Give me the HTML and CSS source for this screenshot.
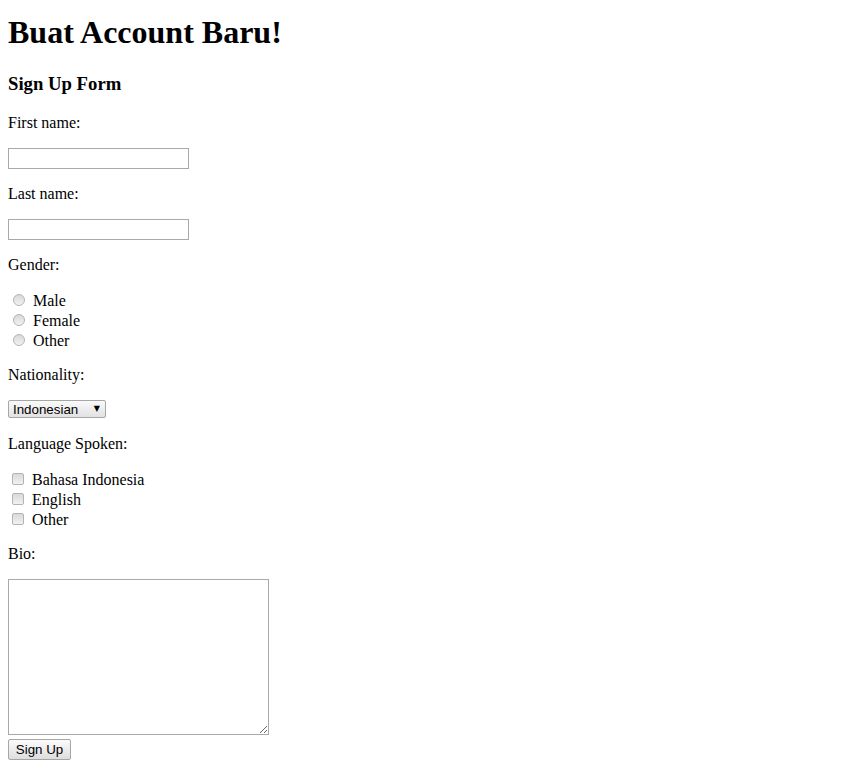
FILE: index.html
```html
<!DOCTYPE html>
<html>
<head>
<meta charset="utf-8">
<title>Sign Up</title>
<link rel="stylesheet" href="styles.css">
</head>
<body class="page">
<h1 class="page-title">Buat Account Baru!</h1>
<h3>Sign Up Form</h3>
<form>
<p><label for="fname">First name:</label></p>
<input class="field" type="text" id="fname">
<p><label for="lname">Last name:</label></p>
<input class="field" type="text" id="lname">
<p>Gender:</p>
<div class="opt"><input class="radio" type="radio" name="g" id="m"><label for="m">Male</label></div>
<div class="opt"><input class="radio" type="radio" name="g" id="f"><label for="f">Female</label></div>
<div class="opt"><input class="radio" type="radio" name="g" id="o"><label for="o">Other</label></div>
<p>Nationality:</p>
<div class="select-row"><span class="select-wrap"><select class="select"><option>Indonesian</option><option>Other</option></select></span></div>
<p>Language Spoken:</p>
<div class="opt"><input class="check" type="checkbox" id="l1"><label for="l1">Bahasa Indonesia</label></div>
<div class="opt"><input class="check" type="checkbox" id="l2"><label for="l2">English</label></div>
<div class="opt"><input class="check" type="checkbox" id="l3"><label for="l3">Other</label></div>
<p>Bio:</p>
<textarea class="bio" cols="30" rows="10"></textarea><br>
<button class="btn" type="submit">Sign Up</button>
</form>
</body>
</html>
```
FILE: styles.css
```css
.page {
  font-family: "Liberation Serif", serif;
  margin: 0 8px 8px;
  color: #000;
}

.page-title {
  margin-top: 14.44px;
}

.field {
  box-sizing: border-box;
  width: 181px;
  height: 21px;
  border: 1px solid #a9a9a9;
  padding: 1px 2px;
  margin: 0;
  font: 13.33px "Liberation Sans", sans-serif;
  background: #fff;
}

.opt {
  line-height: 22px;
  height: 20px;
}

.radio,
.check {
  -webkit-appearance: none;
  appearance: none;
  box-sizing: border-box;
  width: 12px;
  height: 12px;
  border: 1px solid #b4b4b4;
  background: linear-gradient(#d8d8d8, #f2f2f2);
  vertical-align: baseline;
}

.radio {
  border-radius: 50%;
  margin: 3px 8px 0 5px;
}

.check {
  border-radius: 2px;
  margin: 3px 8px 0 4px;
}

.select-row {
  padding-bottom: 1px;
}

.select-wrap {
  position: relative;
  display: inline-block;
}

.select-wrap::after {
  content: "\25BC";
  position: absolute;
  right: 6px;
  top: 4px;
  font: 8px "DejaVu Sans", sans-serif;
  color: #000;
  pointer-events: none;
}

.select {
  -webkit-appearance: none;
  appearance: none;
  box-sizing: border-box;
  width: 98px;
  height: 18px;
  margin: 0;
  padding: 0 0 0 4px;
  border: 1px solid #a6a6a6;
  border-radius: 2px;
  background: linear-gradient(#fafafa, #e2e2e2);
  font: 13.33px "Liberation Sans", sans-serif;
  color: #000;
}

.bio {
  box-sizing: border-box;
  width: 261px;
  height: 156px;
  margin: 0;
  padding: 2px;
  border: 1px solid #a9a9a9;
  vertical-align: bottom;
}

.btn {
  -webkit-appearance: none;
  appearance: none;
  box-sizing: border-box;
  width: 63px;
  height: 21px;
  margin: 4px 0 0;
  padding: 1px 6px;
  border: 1px solid #a6a6a6;
  border-radius: 2px;
  background: linear-gradient(#fbfbfb, #dedede);
  font: 13.33px "Liberation Sans", sans-serif;
  color: #000;
}
```
